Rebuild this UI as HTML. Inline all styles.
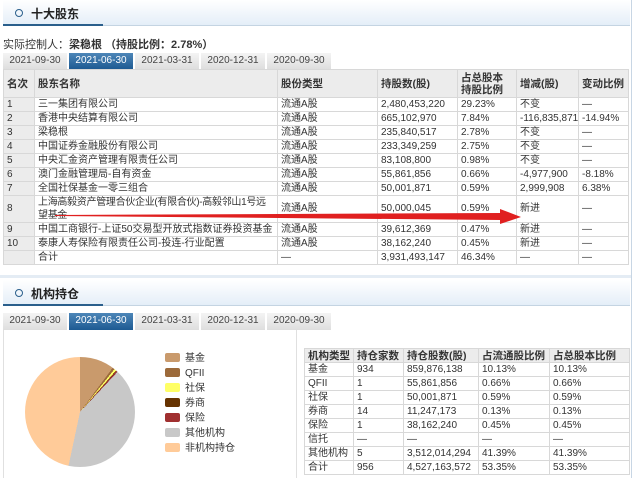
<!DOCTYPE html>
<html><head><meta charset="utf-8"><style>
*{margin:0;padding:0;box-sizing:border-box}
body{width:640px;height:478px;background:#fff;font-family:"Liberation Sans","Noto Sans CJK SC",sans-serif;font-size:10px;color:#333;position:relative;overflow:hidden}
.abs{position:absolute}
.hdr{position:absolute;left:3px;width:627px;height:26px;background:linear-gradient(#fff,#e4eef8);border-bottom:1px solid #c4d4e2}
.hdr .u{position:absolute;left:0;bottom:-1px;width:100px;height:2px;background:#2a5f8c}
.hdr .t{position:absolute;left:12px;top:5px;font-size:12px;font-weight:bold;color:#222}
.hdr .t:before{content:"";display:inline-block;width:6px;height:6px;border:1.5px solid #2a5f8c;border-radius:50%;margin-right:8px;vertical-align:1px}
.tab{position:absolute;width:64px;height:16px;background:linear-gradient(#f4f4f4,#dedede);text-align:center;line-height:16px;font-size:10px;color:#444}
.tab.on{background:linear-gradient(#4d86b8,#1d5a92);color:#fff}
table{border-collapse:collapse;position:absolute;table-layout:fixed}
td{border:1px solid #d8d8d8;padding:0 3px;height:14px;line-height:12px;white-space:nowrap;overflow:hidden;font-size:10px}
tr.h td{background:#ececec;font-weight:bold;font-size:10.5px;color:#333}
td.c1{background:#ececec}
</style></head><body>
<div class="abs" style="left:631px;top:0;width:1px;height:478px;background:#c8d6e4"></div>
<div class="hdr" style="top:0"><div class="t">十大股东</div><div class="u"></div></div>
<div class="abs" style="left:3px;top:36px;font-size:11px;color:#333">实际控制人：<b>梁稳根 （持股比例：2.78%）</b></div>
<div class="tab" style="left:3px;top:53px">2021-09-30</div>
<div class="tab on" style="left:69px;top:53px">2021-06-30</div>
<div class="tab" style="left:135px;top:53px">2021-03-31</div>
<div class="tab" style="left:201px;top:53px">2020-12-31</div>
<div class="tab" style="left:267px;top:53px">2020-09-30</div>
<table style="left:3px;top:69px;width:625px">
<colgroup><col style="width:31px"><col style="width:243px"><col style="width:100px"><col style="width:80px"><col style="width:59px"><col style="width:62px"><col style="width:50px"></colgroup>
<tr class="h"><td style="height:28px">名次</td><td>股东名称</td><td>股份类型</td><td>持股数(股)</td><td style="white-space:normal;line-height:12px">占总股本持股比例</td><td>增减(股)</td><td>变动比例</td></tr>
<tr><td class="c1">1</td><td>三一集团有限公司</td><td>流通A股</td><td>2,480,453,220</td><td>29.23%</td><td>不变</td><td>—</td></tr>
<tr><td class="c1">2</td><td>香港中央结算有限公司</td><td>流通A股</td><td>665,102,970</td><td>7.84%</td><td>-116,835,871</td><td>-14.94%</td></tr>
<tr><td class="c1">3</td><td>梁稳根</td><td>流通A股</td><td>235,840,517</td><td>2.78%</td><td>不变</td><td>—</td></tr>
<tr><td class="c1">4</td><td>中国证券金融股份有限公司</td><td>流通A股</td><td>233,349,259</td><td>2.75%</td><td>不变</td><td>—</td></tr>
<tr><td class="c1">5</td><td>中央汇金资产管理有限责任公司</td><td>流通A股</td><td>83,108,800</td><td>0.98%</td><td>不变</td><td>—</td></tr>
<tr><td class="c1">6</td><td>澳门金融管理局-自有资金</td><td>流通A股</td><td>55,861,856</td><td>0.66%</td><td>-4,977,900</td><td>-8.18%</td></tr>
<tr><td class="c1">7</td><td>全国社保基金一零三组合</td><td>流通A股</td><td>50,001,871</td><td>0.59%</td><td>2,999,908</td><td>6.38%</td></tr>
<tr><td class="c1" style="height:27px">8</td><td style="white-space:normal;line-height:13px;letter-spacing:-0.3px">上海高毅资产管理合伙企业(有限合伙)-高毅邻山1号远望基金</td><td>流通A股</td><td>50,000,045</td><td>0.59%</td><td>新进</td><td>—</td></tr>
<tr><td class="c1">9</td><td>中国工商银行-上证50交易型开放式指数证券投资基金</td><td>流通A股</td><td>39,612,369</td><td>0.47%</td><td>新进</td><td>—</td></tr>
<tr><td class="c1">10</td><td>泰康人寿保险有限责任公司-投连-行业配置</td><td>流通A股</td><td>38,162,240</td><td>0.45%</td><td>新进</td><td>—</td></tr>
<tr><td class="c1"></td><td>合计</td><td>—</td><td>3,931,493,147</td><td>46.34%</td><td>—</td><td>—</td></tr>
</table>
<svg class="abs" style="left:0;top:0" width="640" height="478"><polygon points="55,215 500,213 500,209 521,217 500,224 500,220 55,216" fill="#e02020"/></svg>
<div class="abs" style="left:0;top:275px;width:631px;height:3px;background:#e4ecf4"></div>
<div class="hdr" style="top:280px"><div class="t">机构持仓</div><div class="u"></div></div>
<div class="tab" style="left:3px;top:313px;height:17px">2021-09-30</div>
<div class="tab on" style="left:69px;top:313px;height:17px">2021-06-30</div>
<div class="tab" style="left:135px;top:313px;height:17px">2021-03-31</div>
<div class="tab" style="left:201px;top:313px;height:17px">2020-12-31</div>
<div class="tab" style="left:267px;top:313px;height:17px">2020-09-30</div>
<div class="abs" style="left:3px;top:330px;width:1px;height:148px;background:#e0e0e0"></div>
<div class="abs" style="left:296px;top:330px;width:1px;height:148px;background:#e0e0e0"></div>
<div class="abs" style="left:25px;top:357px;width:110px;height:110px;border-radius:50%;background:conic-gradient(#c99a6c 0 10.13%,#9c6a3a 10.13% 10.79%,#ffff66 10.79% 11.38%,#663300 11.38% 11.51%,#993333 11.51% 11.96%,#c8c8c8 11.96% 53.35%,#ffcb99 53.35% 100%)"></div>
<div class="abs" style="left:165px;top:351px;font-size:10px;line-height:15px">
<div><span style="display:inline-block;width:15px;height:9px;background:#c99a6c;border-radius:2px;margin-right:5px;vertical-align:-1px"></span>基金</div>
<div><span style="display:inline-block;width:15px;height:9px;background:#9c6a3a;border-radius:2px;margin-right:5px;vertical-align:-1px"></span>QFII</div>
<div><span style="display:inline-block;width:15px;height:9px;background:#ffff66;border-radius:2px;margin-right:5px;vertical-align:-1px"></span>社保</div>
<div><span style="display:inline-block;width:15px;height:9px;background:#663300;border-radius:2px;margin-right:5px;vertical-align:-1px"></span>券商</div>
<div><span style="display:inline-block;width:15px;height:9px;background:#a03030;border-radius:2px;margin-right:5px;vertical-align:-1px"></span>保险</div>
<div><span style="display:inline-block;width:15px;height:9px;background:#c8c8c8;border-radius:2px;margin-right:5px;vertical-align:-1px"></span>其他机构</div>
<div><span style="display:inline-block;width:15px;height:9px;background:#ffcb99;border-radius:2px;margin-right:5px;vertical-align:-1px"></span>非机构持仓</div>
</div>
<table style="left:304px;top:348px;width:325px">
<colgroup><col style="width:49px"><col style="width:50px"><col style="width:75px"><col style="width:71px"><col style="width:80px"></colgroup>
<tr class="h"><td style="height:14px">机构类型</td><td>持仓家数</td><td>持仓股数(股)</td><td>占流通股比例</td><td>占总股本比例</td></tr>
<tr><td>基金</td><td>934</td><td>859,876,138</td><td>10.13%</td><td>10.13%</td></tr>
<tr><td>QFII</td><td>1</td><td>55,861,856</td><td>0.66%</td><td>0.66%</td></tr>
<tr><td>社保</td><td>1</td><td>50,001,871</td><td>0.59%</td><td>0.59%</td></tr>
<tr><td>券商</td><td>14</td><td>11,247,173</td><td>0.13%</td><td>0.13%</td></tr>
<tr><td>保险</td><td>1</td><td>38,162,240</td><td>0.45%</td><td>0.45%</td></tr>
<tr><td>信托</td><td>—</td><td>—</td><td>—</td><td>—</td></tr>
<tr><td>其他机构</td><td>5</td><td>3,512,014,294</td><td>41.39%</td><td>41.39%</td></tr>
<tr><td>合计</td><td>956</td><td>4,527,163,572</td><td>53.35%</td><td>53.35%</td></tr>
</table>
</body></html>
